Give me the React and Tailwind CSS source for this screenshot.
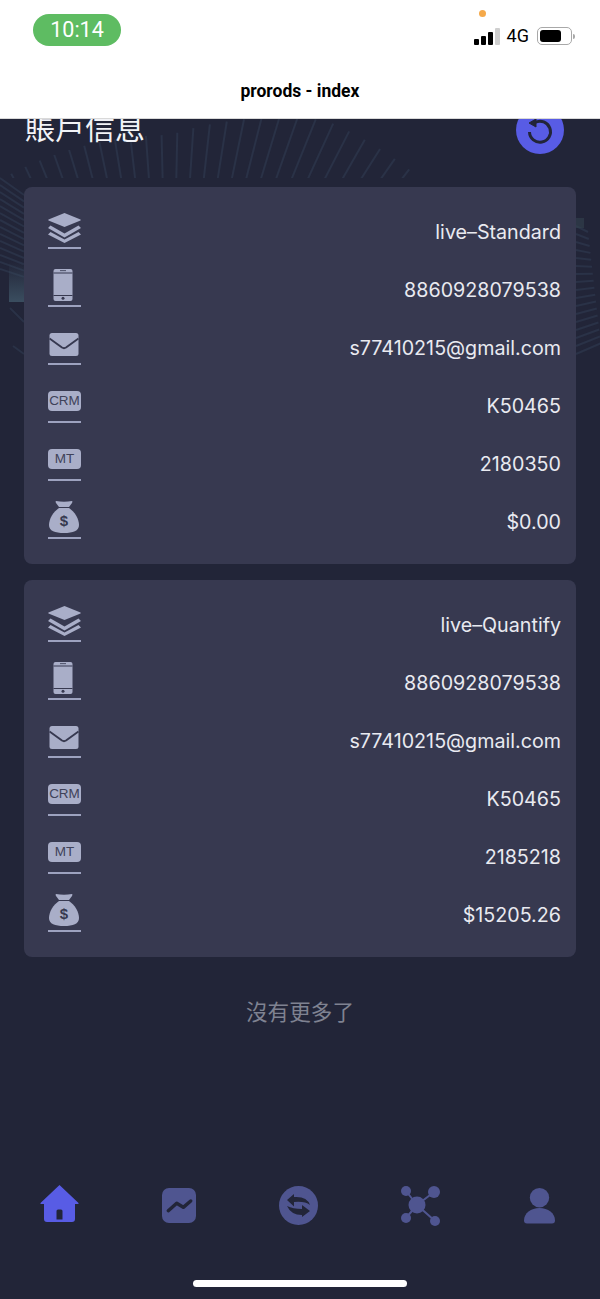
import React from 'react';

const iconColor = '#a9aec8';
const navColor = '#4f5590';
const cardColor = '#373950';

const LayersIcon = () => (
  <svg width="33" height="30" viewBox="0 0 33 30" fill={iconColor}>
    <path d="M16.500 0 L32.500 6.500 Q33 7 32.500 7.500 L16.500 14 L0.500 7.500 Q0 7 0.500 6.500 Z" />
    <path d="M2.500 12.500 L0 15 L16.500 24.500 L33 15 L30.500 12.500 L16.500 20.500 Z" />
    <path d="M2.500 19 L0 21.500 L16.500 30 L33 21.500 L30.500 19 L16.500 26.500 Z" />
  </svg>
);

const PhoneIcon = () => (
  <svg className="mr-[3px]" width="20" height="32" viewBox="0 0 20 32">
    <rect x="0.500" y="0" width="19" height="32" rx="2" fill={iconColor} />
    <rect x="0.500" y="3.500" width="19" height="1" fill={cardColor} />
    <rect x="0.500" y="26" width="19" height="1" fill={cardColor} />
    <rect x="7" y="1.300" width="6" height="0.800" fill={cardColor} />
    <circle cx="10" cy="29.300" r="1.500" fill={cardColor} />
  </svg>
);

const MailIcon = () => (
  <svg className="mr-[2px]" width="30" height="23" viewBox="0 0 30 23">
    <rect x="0.500" y="0" width="29" height="23" rx="2.500" fill={iconColor} />
    <path d="M0.500 5.500 L13 14.500 Q15 15.800 17 14.500 L29.500 5.500" fill="none" stroke={cardColor} strokeWidth="2" />
  </svg>
);

const TagIcon = ({ label }) => (
  <div className="flex h-5 w-[33px] items-center justify-center rounded-[4px] bg-[#a9aec8] text-[13.5px] text-[#3f4259] [font-family:'Liberation_Sans',sans-serif]">
    {label}
  </div>
);

const MoneyIcon = () => (
  <svg className="mr-[1px]" width="30" height="33" viewBox="0 0 30 33">
    <path d="M7 1 Q15 2.500 23 1 Q24 1.500 23 3 L20 7 L10 7 L7 3 Q6 1.500 7 1 Z" fill={iconColor} />
    <path d="M10 8 L20 8 C26 12 30 19 30 25 C30 31 24 33 15 33 C6 33 0 31 0 25 C0 19 4 12 10 8 Z" fill={iconColor} />
    <text x="15" y="26" textAnchor="middle" fontSize="15" fontWeight="700" fill={cardColor} fontFamily="Liberation Sans, sans-serif">$</text>
  </svg>
);

// faint burst of rays behind the page title
const TopRays = () => {
  const lines = [];
  for (let a = -30; a <= 38; a += 2.600) {
    const rad = (a * Math.PI) / 180;
    const outer = a > 0 ? Math.min(345 + a * 2, 392) : 345;
    lines.push(
      <line
        key={a}
        x1={170 + Math.sin(rad) * 200}
        y1={480 - Math.cos(rad) * 200}
        x2={170 + Math.sin(rad) * outer}
        y2={480 - Math.cos(rad) * outer}
      />
    );
  }
  return (
    <svg className="absolute left-0 top-0" width="600" height="178" stroke="#2a3247" strokeWidth="2">
      {lines}
    </svg>
  );
};

const SideRays = () => {
  const left = [];
  const right = [];
  for (let y = 178; y < 270; y += 7) {
    left.push(<line key={y} x1="0" y1={y} x2="24" y2={y + 17 - (y - 178) * 0.1} />);
  }
  for (let y = 226; y < 360; y += 8) {
    const drop = 6 - (y - 226) * 0.13;
    const end = 588 + (y - 226) * 0.1;
    right.push(<line key={y} x1="576" y1={y} x2={end} y2={y + drop} />);
  }
  return (
    <svg className="absolute left-0 top-0" width="600" height="400" stroke="#2a3247" strokeWidth="2">
      <defs>
        <linearGradient id="glow" x1="0" y1="0" x2="0" y2="1">
          <stop offset="0" stopColor="#3d5264" stopOpacity="0" />
          <stop offset="1" stopColor="#3d5264" stopOpacity="0.9" />
        </linearGradient>
      </defs>
      {left}
      <rect x="9" y="262" width="15" height="40" fill="url(#glow)" stroke="none" />
      <line x1="10" y1="308" x2="24" y2="322" />
      <line x1="13" y1="346" x2="24" y2="354" />
      {right}
      <rect x="576" y="218" width="8" height="10" fill="#33424f" stroke="none" opacity="0.6" />
    </svg>
  );
};

const InfoRow = ({ icon, value, gap }) => (
  <div className="flex h-[58px] items-start justify-between pl-6 pr-[15px]">
    <div className={`flex h-[47px] w-[33px] flex-col items-center justify-end border-b-2 border-[#9da2bf] ${gap}`}>
      {icon}
    </div>
    <span className="pt-[18px] text-[19.7px] leading-6 text-[#e9eaf0]">{value}</span>
  </div>
);

const AccountCard = ({ type, crm, mt, balance }) => (
  <div className="rounded-lg bg-[#373950] pt-[15px] pb-[14px]">
    <InfoRow icon={<LayersIcon />} value={type} gap="pb-[4px]" />
    <InfoRow icon={<PhoneIcon />} value="8860928079538" gap="pb-[4px]" />
    <InfoRow icon={<MailIcon />} value="s77410215@gmail.com" gap="pb-[7px]" />
    <InfoRow icon={<TagIcon label="CRM" />} value={crm} gap="pb-[10px]" />
    <InfoRow icon={<TagIcon label="MT" />} value={mt} gap="pb-[10px]" />
    <InfoRow icon={<MoneyIcon />} value={balance} gap="pb-[4px]" />
  </div>
);

const SignalBars = () => (
  <div className="flex items-end gap-[2px]">
    <div className="h-[6px] w-[5px] rounded-[1px] bg-black" />
    <div className="h-[9px] w-[5px] rounded-[1px] bg-black" />
    <div className="h-[13px] w-[5px] rounded-[1px] bg-black" />
    <div className="h-[17px] w-[5px] rounded-[1px] bg-[#cfcfcf]" />
  </div>
);

const Battery = () => (
  <div className="flex items-center">
    <div className="flex h-[18px] w-[35px] items-center rounded-[5px] border-[1.5px] border-[#a8a8a8] p-[2px]">
      <div className="h-full w-[21px] rounded-[3px] bg-black" />
    </div>
    <div className="ml-[1px] h-[5px] w-[2px] rounded-r-full bg-[#a8a8a8]" />
  </div>
);

export default function App() {
  return (
    <div className="relative flex h-[1299px] w-[600px] flex-col overflow-hidden bg-[#222538] [font-family:Inter,'Noto_Sans_CJK_TC',sans-serif]">
      <TopRays />
      <SideRays />

      {/* Browser top bar */}
      <div className="relative z-10 h-[119px] border-b border-[#d9d9d9] bg-white">
        <div className="flex items-start justify-between pl-[33px] pr-[25px] pt-[14px]">
          <div className="flex h-[32px] w-[88px] items-center justify-center rounded-full bg-[#5ebc62] text-[21.5px] text-white [font-family:Roboto,sans-serif]">
            10:14
          </div>
          <div className="relative flex items-center pt-[12px]">
            <div className="absolute left-[5px] top-[-4px] h-[7px] w-[7px] rounded-full bg-[#f5a94a]" />
            <SignalBars />
            <span className="ml-[7px] mr-[8px] text-[18px] leading-5 text-black [font-family:Roboto,sans-serif]">4G</span>
            <Battery />
          </div>
        </div>
        <div className="mt-[35px] text-center text-[17.5px] leading-5 font-bold text-black [font-family:Roboto,sans-serif]">
          prorods - index
        </div>
      </div>

      {/* Title row, scrolled partly under the bar */}
      <div className="relative flex items-start justify-between pl-[25px] pr-[36px]">
        <h1 className="-mt-[7px] text-[30px] leading-[32px] font-normal text-[#f2f3f7]">賬戶信息</h1>
        <div className="-mt-[13px] flex h-[48px] w-[48px] items-center justify-center rounded-full bg-[#585ce5]">
          <svg width="30" height="30" viewBox="0 0 30 30" fill="none" stroke="#222538" strokeWidth="3">
            <path d="M10 7.500 A10.500 10.500 0 1 1 4.500 17" />
            <path d="M4 8 L11 4 L11 12 Z" fill="#222538" strokeWidth="1" />
          </svg>
        </div>
      </div>

      <div className="relative mt-[33px] flex flex-col gap-4 px-6">
        <AccountCard type="live–Standard" crm="K50465" mt="2180350" balance="$0.00" />
        <AccountCard type="live–Quantify" crm="K50465" mt="2185218" balance="$15205.26" />
      </div>

      <p className="relative mt-[41px] text-center text-[21.6px] leading-7 text-[#7f8291]">沒有更多了</p>

      {/* Bottom tabs */}
      <div className="mt-auto flex items-start justify-between pl-[40px] pr-[45px]">
        <svg width="39" height="37" viewBox="0 0 39 37" fill="#585ce5">
          <path d="M19.500 0 L38.500 18 Q39 19 38 19 L35 19 L35 34 Q35 37 32 37 L7 37 Q4 37 4 34 L4 19 L1 19 Q0 19 0.500 18 Z M16.500 26 L16.500 34.500 L22.500 34.500 L22.500 26 Q22.500 24.500 21 24.500 L18 24.500 Q16.500 24.500 16.500 26 Z" fillRule="evenodd" />
        </svg>
        <svg className="mt-[3px]" width="34" height="35" viewBox="0 0 34 35">
          <rect width="34" height="35" rx="7" fill={navColor} />
          <path d="M6.300 22.700 L14.700 15.300 L21.300 19.300 L28.700 13" fill="none" stroke="#222538" strokeWidth="3.500" strokeLinecap="round" strokeLinejoin="round" />
        </svg>
        <svg className="mt-[1px]" width="39" height="39" viewBox="0 0 39 39">
          <circle cx="19.500" cy="19.500" r="19.500" fill={navColor} />
          <path d="M8 14 L15 8 L15 11 Q28 10 31 19 Q26 15 15 16 L15 20.500 Z" fill="#222538" />
          <path d="M31 25 L23 19 L23 23 Q14 23 8 20 Q12 29 23 29 L23 31 Z" fill="#222538" />
        </svg>
        <svg className="mt-[1px]" width="40" height="40" viewBox="0 0 40 40" fill={navColor}>
          <path d="M5 5 L16 19 M33 6 L16 19 M5 32 L16 19 M34 35 L16 19" stroke={navColor} strokeWidth="2" />
          <circle cx="16" cy="19" r="8.500" />
          <circle cx="5" cy="5" r="5" />
          <circle cx="33" cy="6" r="6" />
          <circle cx="5" cy="32" r="5" />
          <circle cx="34" cy="35" r="5" />
        </svg>
        <svg className="mt-[3px]" width="31" height="36" viewBox="0 0 31 36" fill={navColor}>
          <circle cx="15.500" cy="9.700" r="9.700" />
          <path d="M0 32.500 C0 25 7 20 15.500 20 C24 20 31 25 31 32.500 Q31 35.500 28 35.500 L3 35.500 Q0 35.500 0 32.500 Z" />
        </svg>
      </div>

      {/* Home indicator */}
      <div className="mx-auto mb-[12px] mt-[54px] h-[7px] w-[214px] rounded-full bg-white" />
    </div>
  );
}
